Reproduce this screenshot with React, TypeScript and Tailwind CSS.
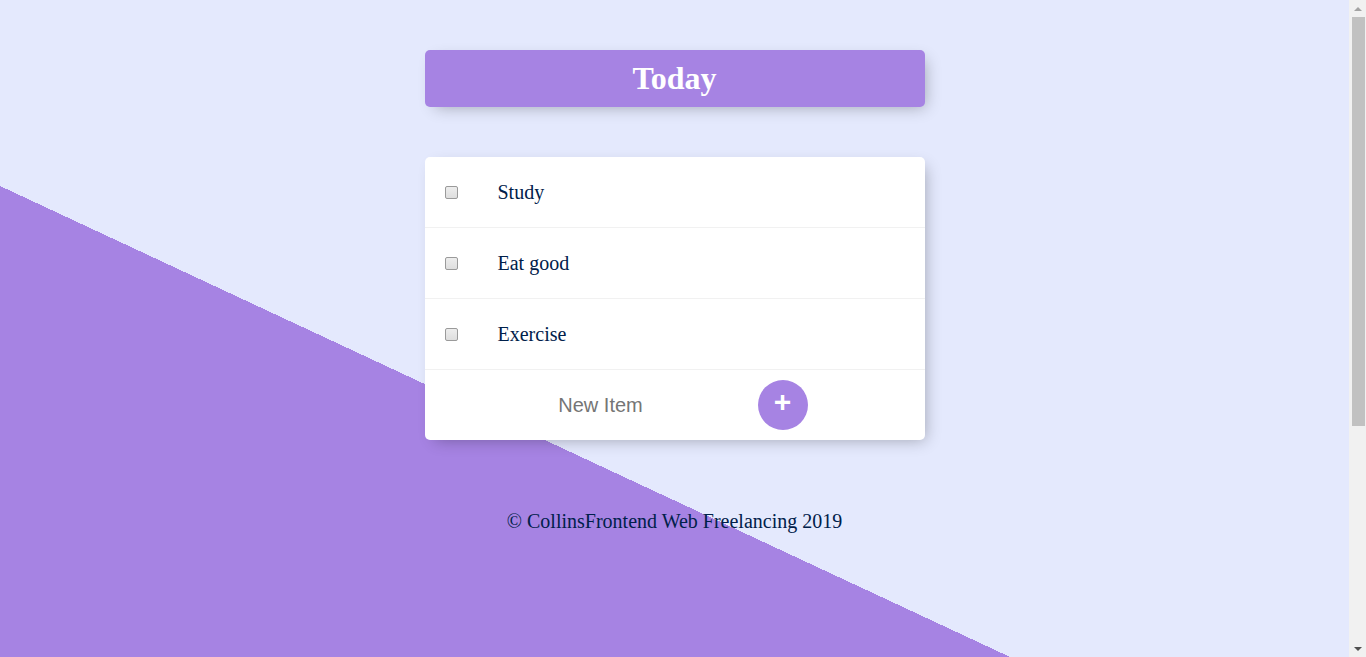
import { useState } from "react";

const ITEMS = ["Study", "Eat good", "Exercise"];

function Scrollbar() {
  return (
    <div className="flex h-[657px] w-[17px] shrink-0 flex-col items-center bg-[#F1F1F1]">
      <div className="flex h-[17px] w-full items-center justify-center">
        <div className="h-0 w-0 border-x-[4px] border-b-[4px] border-x-transparent border-b-[#A3A3A3]" />
      </div>
      <div className="ml-[1px] h-[409px] w-[13px] bg-[#C1C1C1]" />
      <div className="flex-1" />
      <div className="flex h-[17px] w-full items-center justify-center">
        <div className="h-0 w-0 border-x-[4px] border-t-[4px] border-x-transparent border-t-[#505050]" />
      </div>
    </div>
  );
}

export default function App() {
  const [items, setItems] = useState(ITEMS);
  const [text, setText] = useState("");

  const add = (e: React.FormEvent) => {
    e.preventDefault();
    if (!text.trim()) return;
    setItems((l) => [...l, text.trim()]);
    setText("");
  };

  return (
    <div className="flex h-[657px] w-full overflow-hidden">
      <div
        className="h-[1001px] w-[1349px] shrink-0 bg-[linear-gradient(25deg,#A683E3_50%,#E4E9FD_50%)] pt-[50px]"
        style={{ fontFamily: '"Liberation Serif", "Times New Roman", serif' }}
      >
        {/* Heading */}
        <div className="mx-auto w-[500px] rounded-[5px] bg-[#A683E3] shadow-[5px_5px_15px_-5px_rgba(0,0,0,0.3)]">
          <h1 className="py-[10px] text-center text-[32px] font-bold leading-[normal] text-white">Today</h1>
        </div>

        {/* List */}
        <div className="mx-auto mt-[50px] w-[500px] rounded-[5px] bg-white shadow-[5px_5px_15px_-5px_rgba(0,0,0,0.3)]">
          {items.map((item) => (
            <div key={item} className="flex min-h-[71px] items-center border-b border-[#F1F1F1]">
              <input
                type="checkbox"
                className="m-[20px] h-[13px] w-[13px] shrink-0 appearance-none rounded-[2px] border border-[#9a9a9a] bg-[linear-gradient(#ededed,#dedede)] checked:bg-[#A683E3]"
              />
              <p className="m-0 p-[20px] text-[20px] leading-[normal] text-[#00204a]">{item}</p>
            </div>
          ))}
          <form onSubmit={add} className="flex h-[70px] items-center pl-[23px]">
            <input
              type="text"
              value={text}
              onChange={(e) => setText(e.target.value)}
              placeholder="New Item"
              autoComplete="off"
              className="h-[60px] w-[306px] border-none text-center text-[20px] font-extralight text-[#00204a] outline-none placeholder:text-[#757575]"
              style={{ fontFamily: '"Liberation Sans", Arial, sans-serif' }}
            />
            <button
              type="submit"
              className="ml-[4px] flex h-[50px] w-[50px] items-center justify-center rounded-full bg-[#A683E3] pb-[6px] text-[30px] font-bold leading-none text-white"
              style={{ fontFamily: '"Liberation Sans", Arial, sans-serif' }}
            >
              +
            </button>
          </form>
        </div>

        {/* Footer */}
        <footer className="mt-[70px] text-center text-[20px] leading-[normal] text-[#00204a]">
          © CollinsFrontend Web Freelancing 2019
        </footer>
      </div>
      <Scrollbar />
    </div>
  );
}
